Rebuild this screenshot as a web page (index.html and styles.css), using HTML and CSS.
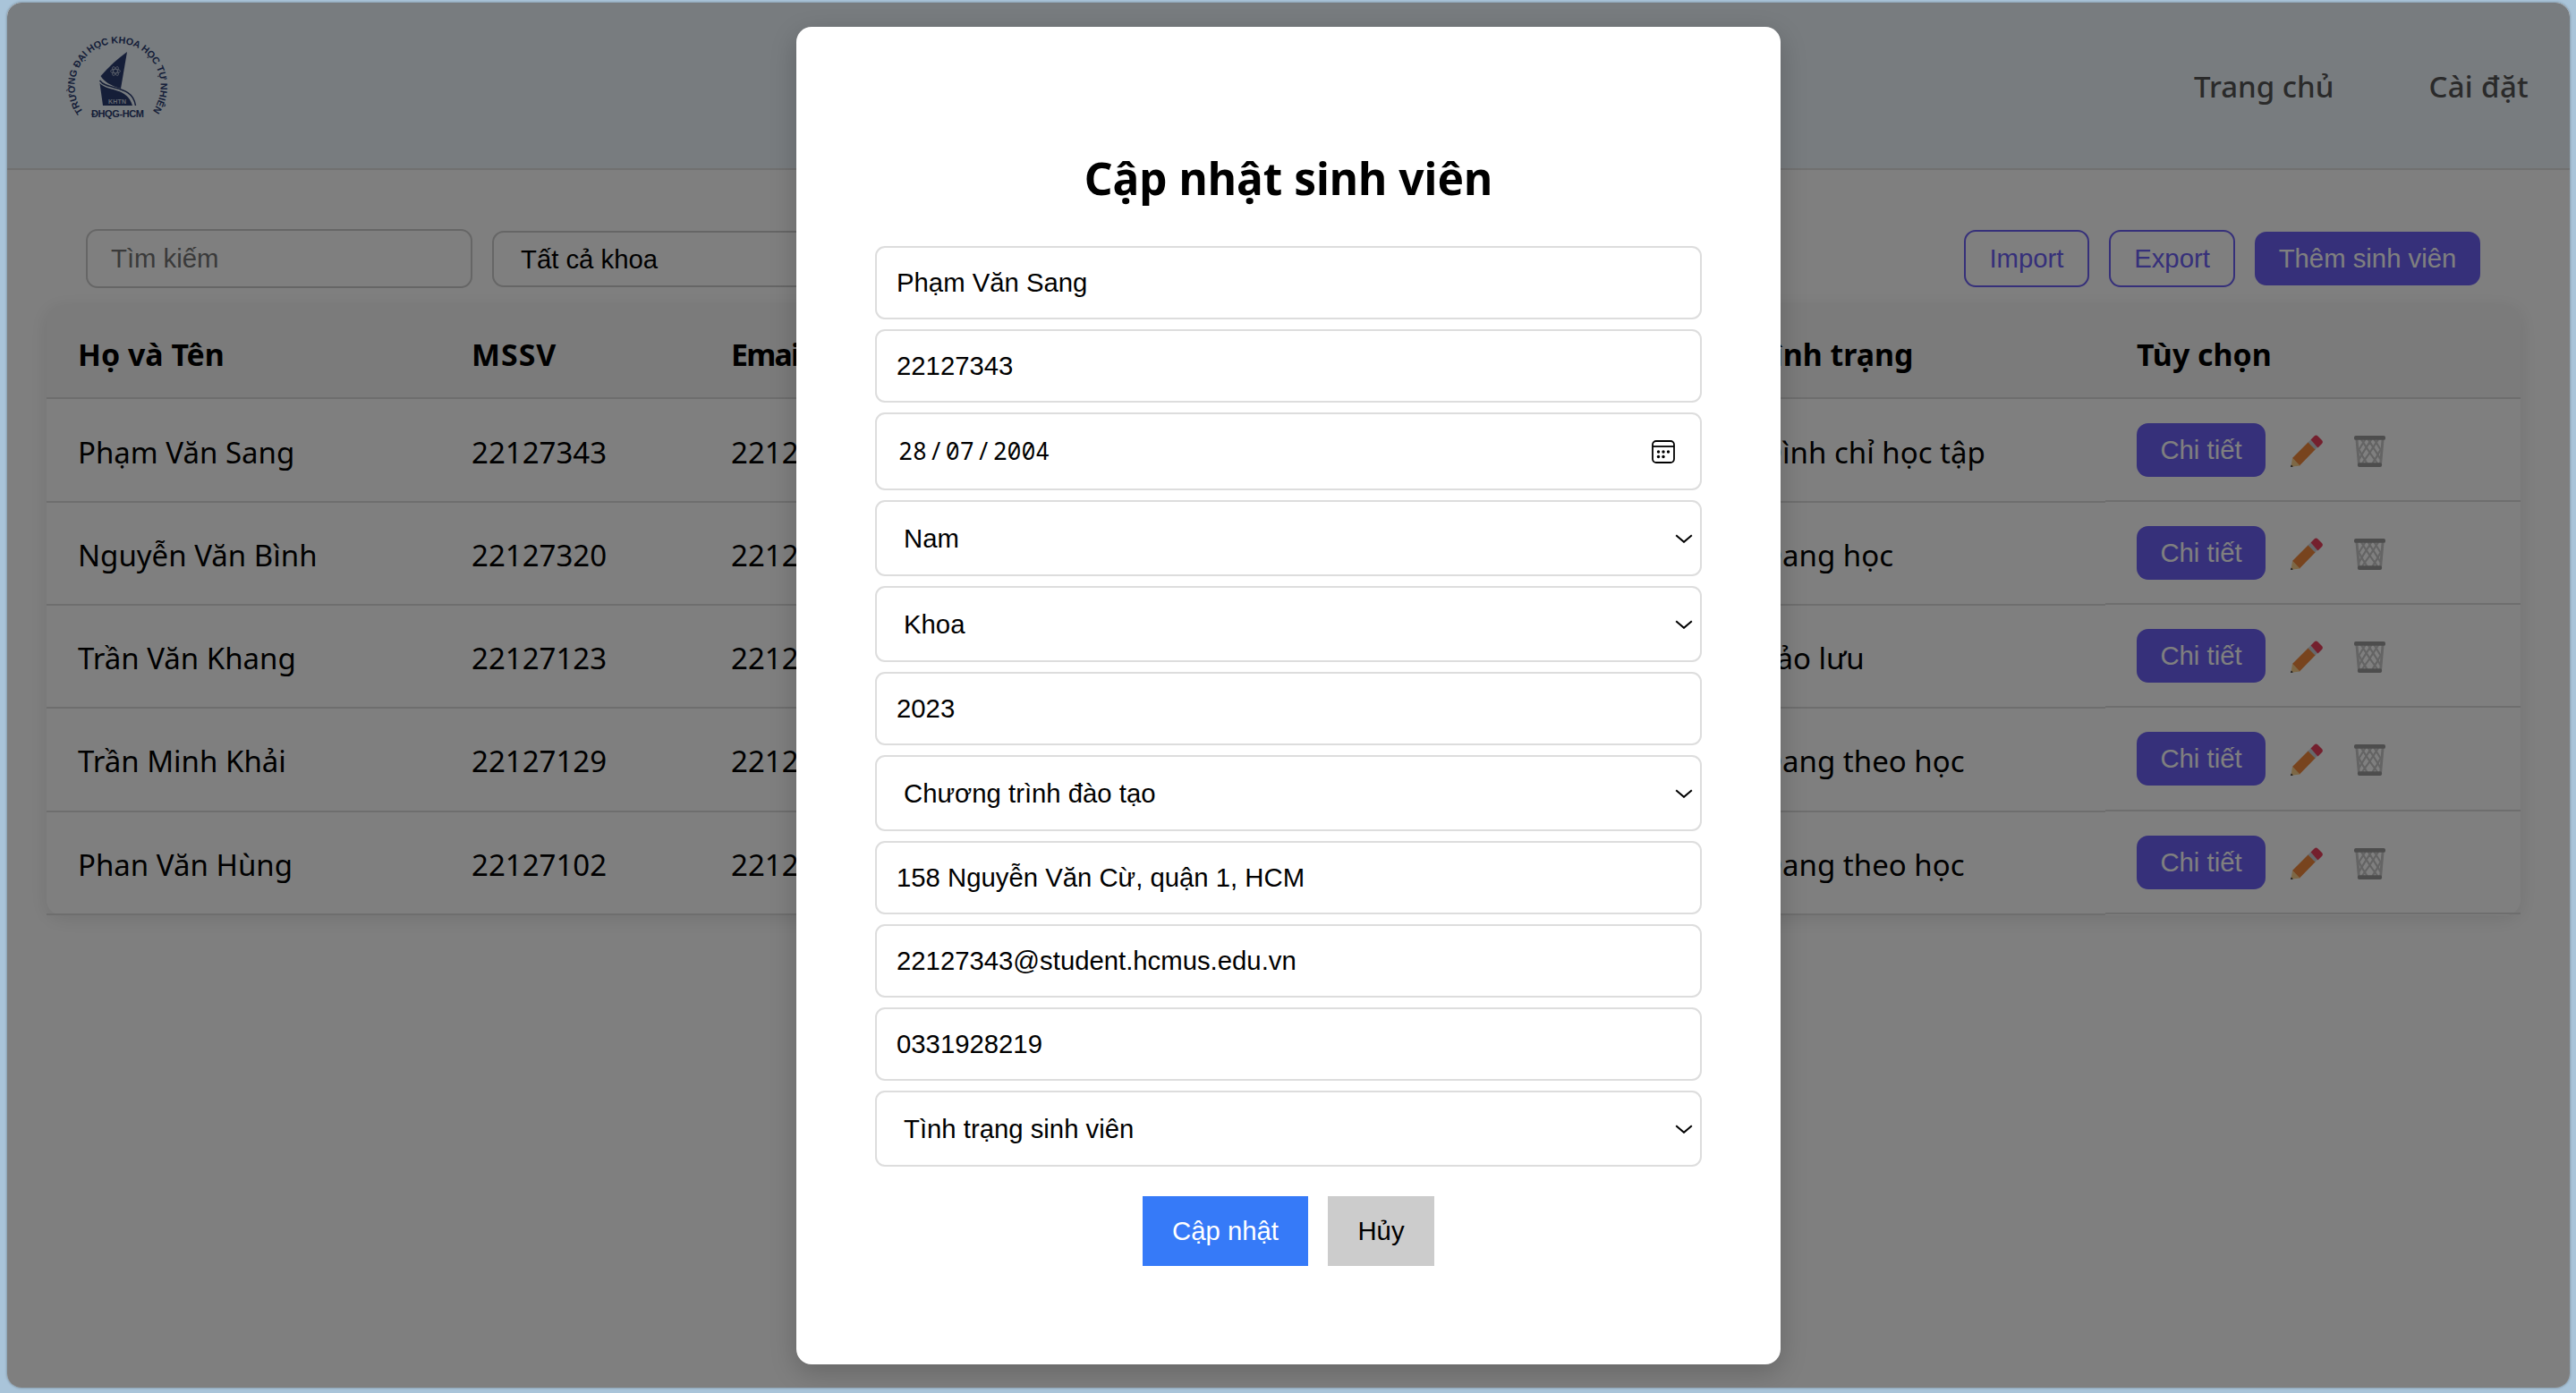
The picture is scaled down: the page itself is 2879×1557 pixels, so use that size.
FILE: index.html
```html
<!DOCTYPE html>
<html lang="vi">
<head>
<meta charset="utf-8">
<title>Quản lý sinh viên</title>
<link rel="stylesheet" href="styles.css">
</head>
<body>
<svg class="sprite" width="0" height="0">
  <symbol id="pencil" viewBox="0 0 36 36">
    <path fill="#f0883c" d="M2 26 20 8l8 8-18 18.500z"/>
    <path fill="#ccd0d6" d="M19.500 8.500 22.500 5.500l8 8-3 3z"/>
    <path fill="#e8405c" d="M22.500 5.500 26.500 1.500a3 3 0 0 1 4 0l4.500 4.500a3 3 0 0 1 0 4l-4.500 4.500z"/>
    <path fill="#fbd08c" d="M2 26 10.500 34.500 .5 35.700z"/>
    <path fill="#222" d="M.8 33.500 2.800 35.600 0 36z"/>
  </symbol>
  <symbol id="trash" viewBox="0 0 36 36" preserveAspectRatio="none">
    <g fill="none" stroke="#c8c8c8" stroke-width="2.200">
      <path stroke-width="3" d="M3 4 5.500 32M33 4 30.500 32"/>
      <path d="M8 4 19 21 27 32M16 4 28 23 30 27M23 4 31 17M5 15 10 24 15 32M28 4 17 21 9 32M20 4 8 23 6 27M13 4 5 17M31 15 26 24 21 32"/>
    </g>
    <rect x="0" y="0" width="36" height="5" rx="2" fill="#9a9a9a"/>
    <rect x="4" y="31" width="28" height="5" rx="2" fill="#9a9a9a"/>
  </symbol>
  <symbol id="chevron" viewBox="0 0 20 10">
    <path d="M1.200 1.200 10 8.800l8.800-7.600" fill="none" stroke="#000" stroke-width="2"/>
  </symbol>
</svg>
<div class="app">
  <header class="header">
    <svg class="logo" viewBox="0 0 116 96">
      <defs><path id="ring" d="M19 87A48 48 0 1 1 96 87"/></defs>
      <text class="ring-text"><textPath href="#ring" textLength="211" lengthAdjust="spacing">TRƯỜNG ĐẠI HỌC KHOA HỌC TỰ NHIÊN</textPath></text>
      <path fill="#2a3c70" d="M68 20 61 61C50 58 42 53 38.500 47 48 36 58 27 68 20z"/>
      <path fill="#2a3c70" d="M37.500 55C47 65 68 59 74 80H41z"/>
      <path fill="none" stroke="#2a3c70" stroke-width="1.500" d="M37.500 52C46 64 74 56 77.500 80"/>
      <g fill="none" stroke="#b9c4d6" stroke-width=".8">
        <ellipse cx="55" cy="41.500" rx="5.500" ry="2.200"/>
        <ellipse cx="55" cy="41.500" rx="5.500" ry="2.200" transform="rotate(60 55 41.500)"/>
        <ellipse cx="55" cy="41.500" rx="5.500" ry="2.200" transform="rotate(120 55 41.500)"/>
      </g>
      <text x="47" y="78" class="khtn" textLength="20">KHTN</text>
      <text x="28" y="93" class="dhqg" textLength="59">ĐHQG-HCM</text>
    </svg>
    <nav class="nav"><a>Trang chủ</a><a>Cài đặt</a></nav>
  </header>
  <div class="toolbar">
    <div class="search">Tìm kiếm</div>
    <div class="filter">Tất cả khoa</div>
    <div class="actions">
      <button class="btn outline import">Import</button>
      <button class="btn outline export">Export</button>
      <button class="btn solid">Thêm sinh viên</button>
    </div>
  </div>
  <div class="table">
    <div class="row head"><span>Họ và Tên</span><span class="code">MSSV</span><span class="email">Email</span><span class="state">Tình trạng</span><span>Tùy chọn</span></div>
    <div class="row"><span>Phạm Văn Sang</span><span>22127343</span><span>22127343@student</span><span class="status">Đình chỉ học tập</span><span class="ops"><button class="btn solid">Chi tiết</button><svg class="pencil"><use href="#pencil"/></svg><svg class="trash"><use href="#trash"/></svg></span></div>
    <div class="row"><span>Nguyễn Văn Bình</span><span>22127320</span><span>22127320@student</span><span class="status">Đang học</span><span class="ops"><button class="btn solid">Chi tiết</button><svg class="pencil"><use href="#pencil"/></svg><svg class="trash"><use href="#trash"/></svg></span></div>
    <div class="row"><span>Trần Văn Khang</span><span>22127123</span><span>22127123@student</span><span>Bảo lưu</span><span class="ops"><button class="btn solid">Chi tiết</button><svg class="pencil"><use href="#pencil"/></svg><svg class="trash"><use href="#trash"/></svg></span></div>
    <div class="row"><span>Trần Minh Khải</span><span>22127129</span><span>22127129@student</span><span class="status">Đang theo học</span><span class="ops"><button class="btn solid">Chi tiết</button><svg class="pencil"><use href="#pencil"/></svg><svg class="trash"><use href="#trash"/></svg></span></div>
    <div class="row"><span>Phan Văn Hùng</span><span>22127102</span><span>22127102@student</span><span class="status">Đang theo học</span><span class="ops"><button class="btn solid">Chi tiết</button><svg class="pencil"><use href="#pencil"/></svg><svg class="trash"><use href="#trash"/></svg></span></div>
  </div>
  <div class="overlay">
    <div class="modal">
      <h2>Cập nhật sinh viên</h2>
      <div class="field">Phạm Văn Sang</div>
      <div class="field">22127343</div>
      <div class="field date"><span class="dmy"><span>28</span><i>/</i><span>07</span><i>/</i><span>2004</span></span>
        <svg class="calendar" viewBox="0 0 26 26"><rect x="1" y="1" width="24" height="24" rx="4" fill="none" stroke="#000" stroke-width="1.800"/><path d="M1 7h24" stroke="#000" stroke-width="1.800"/><g><circle cx="7.500" cy="13" r="1.700"/><circle cx="13" cy="13" r="1.700"/><circle cx="18.500" cy="13" r="1.700"/><circle cx="7.500" cy="18.500" r="1.700"/><circle cx="13" cy="18.500" r="1.700"/></g></svg>
      </div>
      <div class="field select">Nam<svg class="chevron"><use href="#chevron"/></svg></div>
      <div class="field select">Khoa<svg class="chevron"><use href="#chevron"/></svg></div>
      <div class="field">2023</div>
      <div class="field select">Chương trình đào tạo<svg class="chevron"><use href="#chevron"/></svg></div>
      <div class="field">158 Nguyễn Văn Cừ, quận 1, HCM</div>
      <div class="field">22127343@student.hcmus.edu.vn</div>
      <div class="field">0331928219</div>
      <div class="field select">Tình trạng sinh viên<svg class="chevron"><use href="#chevron"/></svg></div>
      <div class="buttons"><button class="update">Cập nhật</button><button class="cancel">Hủy</button></div>
    </div>
  </div>
</div>
</body>
</html>
```
FILE: styles.css
```css
* { box-sizing: border-box; }
body { margin: 0; padding: 3px 7px 6px 8px; height: 1557px; background: #a9c4d9; overflow: hidden; font-family: "Noto Sans", sans-serif; }
button { font-family: inherit; border: 0; padding: 0; margin: 0; }
.sprite { position: absolute; }
.app { position: relative; height: 1548px; border-radius: 16px; background: #fff; overflow: hidden; box-shadow: 0 0 3px rgba(0,0,0,.4); }

.header { height: 187px; border-bottom: 2px solid #e0e0e0; background: #f0f8ff; display: flex; justify-content: space-between; align-items: flex-start; padding: 35px 46px 0 66px; }
.logo { width: 116px; height: 96px; overflow: visible; }
.logo text { font-family: "Liberation Sans", sans-serif; font-weight: 700; fill: #2a3c70; }
.logo .ring-text { font-size: 10.800px; }
.logo .khtn { font-size: 7px; fill: #c8d0de; }
.logo .dhqg { font-size: 11px; }
.nav { display: flex; gap: 106px; padding-top: 35px; font-size: 33px; line-height: 48px; font-weight: 500; color: #555; }
.nav a:last-child { letter-spacing: .3px; }

.toolbar { height: 151px; padding: 66px 100px 0 88px; display: flex; align-items: flex-start; font-family: "Liberation Sans", sans-serif; font-size: 29.300px; }
.search { width: 432px; height: 66px; border: 2px solid #ccc; border-radius: 13px; padding-left: 26px; line-height: 61px; color: #757575; }
.filter { width: 440px; height: 63px; border: 2px solid #ccc; border-radius: 13px; margin: 2px 0 0 22px; padding-left: 30px; line-height: 60px; }
.actions { margin-left: auto; display: flex; gap: 22px; align-items: flex-start; padding-top: 1px; }
.btn { height: 60px; border-radius: 13px; font-size: 29.300px; font-family: "Liberation Sans", sans-serif; line-height: 58px; text-align: center; }
.outline { height: 64px; width: 140px; border: 2px solid #6c60f4; color: #6c60f4; background: transparent; }
.export { width: 141px; }
.solid { background: #6c60f4; color: #fff; width: 252px; }
.actions .solid { margin-top: 2px; }

.table { margin: 0 55px 0 44px; border-radius: 17px; box-shadow: 0 4px 22px rgba(0,0,0,.1); font-size: 33px; }
.row { height: 115.200px; display: grid; grid-template-columns: 440px 290px 1147px 424px 464px; }
.row > span { border-bottom: 2px solid #ddd; padding: 35px 0 0 35px; line-height: 48px; white-space: nowrap; overflow: hidden; }
.row > .status { padding-left: 39px; }
.row.head { height: 105px; margin-bottom: .8px; background: #f7f7f7; border-radius: 17px 17px 0 0; font-weight: 700; font-size: 33.900px; }
.row.head > span { padding-top: 31px; }
.row.head > .code { letter-spacing: 1px; }
.row.head > .email { letter-spacing: -1.800px; }
.row.head > .state { padding-left: 34px; }
.row > .ops { display: flex; padding-top: 26px; height: 114.200px; }
.ops .btn { width: 144px; }
.pencil { width: 36px; height: 36px; margin: 13px 0 0 28px; }
.trash { width: 35px; height: 35px; margin: 14px 0 0 35px; }

.overlay { position: absolute; inset: 0; background: rgba(0,0,0,.5); display: flex; justify-content: center; align-items: flex-start; padding: 27px 0 0; }
.modal { width: 1100px; height: 1495px; border-radius: 17px; background: #fff; box-shadow: 0 9px 30px rgba(0,0,0,.2); padding: 130px 88px 0; display: flex; flex-direction: column; gap: 11px; font-family: "Liberation Sans", sans-serif; font-size: 29.300px; }
h2 { margin: 0 0 9px; height: 95px; line-height: 78px; text-align: center; font-family: "Noto Sans", sans-serif; font-size: 49.600px; font-weight: 700; white-space: nowrap; }
.field { height: 82px; flex: none; border: 2px solid #ddd; border-radius: 11px; padding: 0 22px; display: flex; align-items: center; white-space: nowrap; }
.select { height: 85px; padding: 0 8px 0 30px; justify-content: space-between; }
.date { height: 87px; padding: 0 28px 0 24px; justify-content: space-between; }
.dmy { display: flex; padding-bottom: 2px; font-family: "Noto Sans Mono", "DejaVu Sans Mono", monospace; font-size: 26.500px; }
.dmy i { width: 21px; text-align: center; font-style: normal; }
.calendar { width: 26px; height: 26px; }
.chevron { width: 20px; height: 10px; }
.buttons { display: flex; justify-content: center; gap: 22px; margin-top: 22px; }
.buttons button { height: 78px; font-family: "Liberation Sans", sans-serif; font-size: 29.300px; color: #000; }
.buttons .update { width: 185px; background: #367af8; color: #fff; }
.buttons .cancel { width: 119px; background: #ccc; }
```
